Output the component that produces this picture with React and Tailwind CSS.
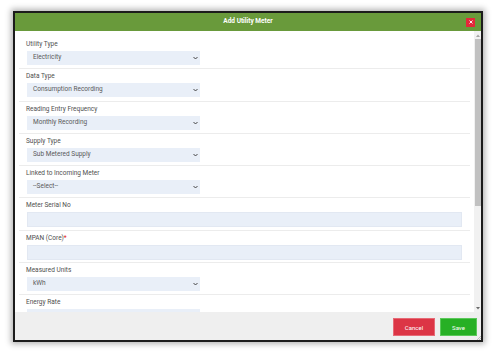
import React from "react";

const Chevron = () => (
  <svg width="5" height="4" viewBox="0 0 10 6" className="shrink-0">
    <path d="M1 1 L5 5 L9 1" fill="none" stroke="#333" strokeWidth="1.8" />
  </svg>
);

const SelectRow = ({ label, value }) => (
  <div className="h-[32.3px] mx-[4px] border-b border-[#ececec] px-[7px] pt-[3px] shrink-0">
    <div className="h-[8px] leading-[8px] text-[6.5px] text-[#505050]">{label}</div>
    <div className="mt-[3px] ml-[1px] w-[173px] h-[14px] bg-[#e9eff8] flex items-center justify-between pl-[6px] pr-[2px]">
      <span className="text-[6.5px] text-[#5a5a5a]">{value}</span>
      <Chevron />
    </div>
  </div>
);

const InputRow = ({ label, required }) => (
  <div className="h-[32.3px] mx-[4px] border-b border-[#ececec] px-[7px] pt-[3px] shrink-0">
    <div className="h-[8px] leading-[8px] text-[6.5px] text-[#505050]">
      {label}
      {required && <span className="text-[#e02020]">*</span>}
    </div>
    <div className="mt-[3px] ml-[1px] mr-[1px] h-[15px] bg-[#e9eff8] border border-[#e2e8f2]" />
  </div>
);

export default function App() {
  return (
    <div className="w-[496px] h-[354px] bg-white pt-[11px] pl-[13px]" style={{ fontFamily: "Roboto, 'Liberation Sans', sans-serif" }}>
      <div className="w-[470px] h-[331px] border-2 border-[#1c1c1c] shadow-[0_0_6px_2px_rgba(0,0,0,0.3)] flex flex-col bg-white">
        <div className="h-[18px] bg-[#699a3b] flex items-center relative shrink-0">
          <div className="flex-1 text-center text-white font-bold text-[6.5px]">Add Utility Meter</div>
          <div className="absolute right-[6px] top-[4.5px] w-[9px] h-[9px] bg-[#e4283a] flex items-center justify-center">
            <svg width="4" height="4" viewBox="0 0 4 4">
              <path d="M0.5 0.5 L3.5 3.5 M3.5 0.5 L0.5 3.5" stroke="white" strokeWidth="0.9" />
            </svg>
          </div>
        </div>
        <div className="h-[281px] flex shrink-0">
          <div className="flex-1 overflow-hidden pt-[6px] flex flex-col">
            <SelectRow label="Utility Type" value="Electricity" />
            <SelectRow label="Data Type" value="Consumption Recording" />
            <SelectRow label="Reading Entry Frequency" value="Monthly Recording" />
            <SelectRow label="Supply Type" value="Sub Metered Supply" />
            <SelectRow label="Linked to Incoming Meter" value="--Select--" />
            <InputRow label="Meter Serial No" />
            <InputRow label="MPAN (Core)" required />
            <SelectRow label="Measured Units" value="kWh" />
            <SelectRow label="Energy Rate" value="" />
          </div>
          <div className="w-[7px] bg-[#f1f1f1] flex flex-col">
            <div className="h-[8px] flex items-center justify-center">
              <svg width="4" height="3" viewBox="0 0 4 3"><path d="M0 3 L2 0.5 L4 3Z" fill="#a3a3a3" /></svg>
            </div>
            <div className="h-[167px] mx-[0.5px] bg-[#c1c1c1]" />
            <div className="flex-1" />
            <div className="h-[8px] flex items-center justify-center">
              <svg width="4" height="3" viewBox="0 0 4 3"><path d="M0 0 L2 2.5 L4 0Z" fill="#6b6b6b" /></svg>
            </div>
          </div>
        </div>
        <div className="flex-1 bg-[#efefef] flex justify-end items-start pt-[6px] pr-[4px] gap-[5px] relative">
          <div className="w-[42px] h-[18px] bg-[#dc3545] border border-[#e66a76] flex items-center justify-center text-white text-[6px]">Cancel</div>
          <div className="w-[37px] h-[18px] bg-[#27b025] border border-[#5bc85a] flex items-center justify-center text-white text-[6px]">Save</div>
          <svg width="5" height="5" viewBox="0 0 5 5" className="absolute right-0 bottom-0">
            <path d="M5 1 L1 5 M5 3 L3 5" stroke="#999" strokeWidth="0.6" />
          </svg>
        </div>
      </div>
    </div>
  );
}
